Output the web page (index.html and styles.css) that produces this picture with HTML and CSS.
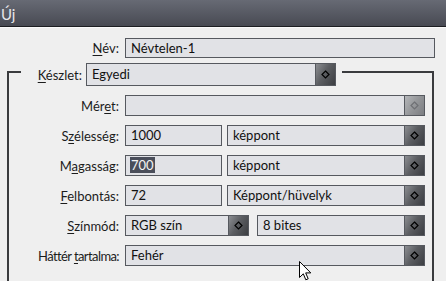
FILE: index.html
```html
<!DOCTYPE html>
<html lang="hu">
<head>
<meta charset="utf-8">
<title>Új</title>
<link rel="stylesheet" href="styles.css">
</head>
<body>
<div class="titlebar"><span class="title">Új</span></div>
<div class="content">
  <div class="name-row">
    <label class="lbl"><u>N</u>év:</label>
    <div class="field name-field"><span class="val">Névtelen-1</span></div>
  </div>
  <div class="frame">
    <div class="frame-head">
      <span class="seg seg-left"></span>
      <label class="lbl head-lbl"><u>K</u>észlet:</label>
      <div class="field select preset"><span class="val">Egyedi</span><span class="btn"><svg viewBox="0 0 9 9" width="9" height="9"><path d="M4.5 1 L8 4.5 L4.5 8 L1 4.5 Z" fill="none" stroke="#000" stroke-width="1.2"/></svg></span></div>
      <span class="seg seg-right"></span>
    </div>
    <div class="frame-body">
      <div class="row">
        <label class="lbl">Mér<u>e</u>t:</label>
        <div class="field select w300 disabled"><span class="val"></span><span class="btn"><svg viewBox="0 0 9 9" width="9" height="9"><path d="M4.5 1 L8 4.5 L4.5 8 L1 4.5 Z" fill="none" stroke="#6e7074" stroke-width="1.2"/></svg></span></div>
      </div>
      <div class="row">
        <label class="lbl">S<u>z</u>élesség:</label>
        <div class="controls">
          <div class="field num"><span class="val">1000</span></div>
          <div class="field select unit"><span class="val">képpont</span><span class="btn"><svg viewBox="0 0 9 9" width="9" height="9"><path d="M4.5 1 L8 4.5 L4.5 8 L1 4.5 Z" fill="none" stroke="#000" stroke-width="1.2"/></svg></span></div>
        </div>
      </div>
      <div class="row">
        <label class="lbl">M<u>a</u>gasság:</label>
        <div class="controls">
          <div class="field num"><span class="val"><span class="sel">700</span></span></div>
          <div class="field select unit"><span class="val">képpont</span><span class="btn"><svg viewBox="0 0 9 9" width="9" height="9"><path d="M4.5 1 L8 4.5 L4.5 8 L1 4.5 Z" fill="none" stroke="#000" stroke-width="1.2"/></svg></span></div>
        </div>
      </div>
      <div class="row">
        <label class="lbl"><u>F</u>elbontás:</label>
        <div class="controls">
          <div class="field num"><span class="val">72</span></div>
          <div class="field select unit"><span class="val">Képpont/hüvelyk</span><span class="btn"><svg viewBox="0 0 9 9" width="9" height="9"><path d="M4.5 1 L8 4.5 L4.5 8 L1 4.5 Z" fill="none" stroke="#000" stroke-width="1.2"/></svg></span></div>
        </div>
      </div>
      <div class="row">
        <label class="lbl"><u>S</u>zínmód:</label>
        <div class="controls wide-gap">
          <div class="field select mode"><span class="val">RGB szín</span><span class="btn"><svg viewBox="0 0 9 9" width="9" height="9"><path d="M4.5 1 L8 4.5 L4.5 8 L1 4.5 Z" fill="none" stroke="#000" stroke-width="1.2"/></svg></span></div>
          <div class="field select bits"><span class="val">8 bites</span><span class="btn"><svg viewBox="0 0 9 9" width="9" height="9"><path d="M4.5 1 L8 4.5 L4.5 8 L1 4.5 Z" fill="none" stroke="#000" stroke-width="1.2"/></svg></span></div>
        </div>
      </div>
      <div class="row">
        <label class="lbl tight">Háttér <u>t</u>artalma:</label>
        <div class="field select w300"><span class="val">Fehér</span><span class="btn"><svg viewBox="0 0 9 9" width="9" height="9"><path d="M4.5 1 L8 4.5 L4.5 8 L1 4.5 Z" fill="none" stroke="#000" stroke-width="1.2"/></svg></span></div>
      </div>
    </div>
  </div>
</div>
<svg class="cursor" viewBox="0 0 13 21" width="13" height="21"><path d="M0.5 0.5 L0.5 16.5 L4.3 12.8 L6.8 18.8 L9.2 17.8 L6.7 11.9 L11.8 11.9 Z" fill="#fff" stroke="#000" stroke-width="1" stroke-linejoin="miter"/></svg>
</body>
</html>
```

FILE: styles.css
```css
html, body {
  margin: 0;
  padding: 0;
}
body {
  width: 446px;
  height: 281px;
  overflow: hidden;
  background: #efefef;
  font-family: Lato, "Open Sans", sans-serif;
  font-size: 13px;
  color: #1c1c1c;
  position: relative;
}
.titlebar {
  height: 26px;
  background: linear-gradient(to bottom, #676a74, #484a53);
  border-bottom: 1px solid #1d1e22;
  box-shadow: 0 1px 0 #fafafa;
  display: flex;
  align-items: center;
}
.title {
  color: #e6e6ea;
  font-size: 15px;
  padding-left: 1px;
  margin-top: 2px;
}
.content {
  padding-top: 11px;
}
.name-row {
  display: flex;
  align-items: center;
}
.name-row .lbl {
  width: 119px;
}
.lbl {
  text-align: right;
  white-space: nowrap;
  color: #1c1c1c;
}
.lbl.tight {
  letter-spacing: -0.6px;
}
.lbl u {
  text-decoration-thickness: 1px;
  text-underline-offset: 2px;
}
.field {
  box-sizing: border-box;
  height: 21px;
  border: 1px solid #56595f;
  background: #e1e2e6;
  display: flex;
  align-items: center;
  color: #111;
}
.val {
  flex: 1;
  padding-left: 5px;
  white-space: nowrap;
  overflow: hidden;
  line-height: 17px;
}
.name-field {
  height: 20px;
  width: 310px;
  margin-left: 6px;
}
.frame {
  margin-left: 7px;
  width: 427px;
  margin-top: 5px;
}
.frame-head {
  display: flex;
  height: 23px;
  align-items: center;
}
.seg {
  align-self: stretch;
  margin-top: 8px;
  border-top: 2px solid #3a3b3e;
}
.seg-left {
  width: 12px;
  border-left: 2px solid #3a3b3e;
}
.seg-right {
  flex: 1;
  margin-left: 6px;
  border-right: 2px solid #3a3b3e;
}
.head-lbl {
  width: 61px;
}
.preset {
  margin-left: 4px;
  width: 250px;
  height: 23px;
}
.btn {
  width: 19px;
  align-self: stretch;
  border-left: 1px solid #56595f;
  background: linear-gradient(120deg, #8c8e92 0%, #5c5e62 45%, #3c3e42 100%);
  display: flex;
  align-items: center;
  justify-content: center;
}
.disabled .btn {
  background: linear-gradient(120deg, #b4b6b9 0%, #949699 50%, #7c7e82 100%);
}
.frame-body {
  border-left: 2px solid #3a3b3e;
  border-right: 2px solid #3a3b3e;
  padding: 9px 0 40px;
  display: flex;
  flex-direction: column;
  gap: 9px;
}
.row {
  display: grid;
  grid-template-columns: 110px auto;
  column-gap: 6px;
  align-items: center;
}
.controls {
  display: flex;
  gap: 5px;
}
.controls.wide-gap {
  gap: 8px;
}
.w300 {
  width: 300px;
}
.num {
  width: 97px;
}
.unit {
  width: 198px;
}
.mode {
  width: 124px;
}
.bits {
  width: 168px;
}
.sel {
  background: #4a4e5a;
  color: #f4f4f4;
  padding: 0 1px;
  margin-left: -1px;
  display: inline-block;
  line-height: 16px;
}
.cursor {
  position: absolute;
  left: 299px;
  top: 261px;
}
```
